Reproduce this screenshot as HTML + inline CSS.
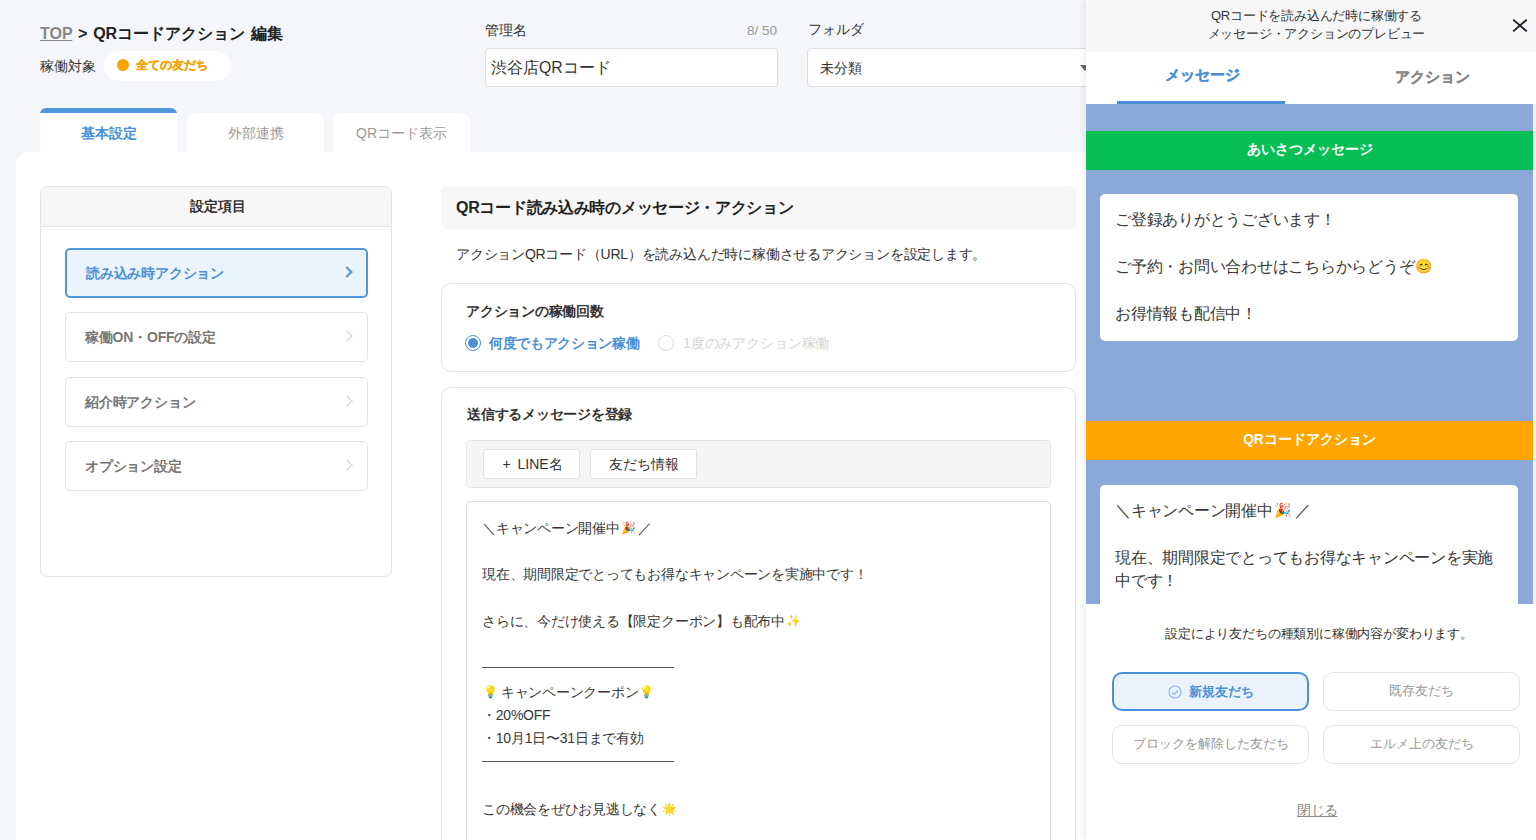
<!DOCTYPE html>
<html lang="ja"><head><meta charset="utf-8">
<style>
*{box-sizing:border-box;margin:0;padding:0}
html,body{width:1536px;height:840px;overflow:hidden}
body{font-family:"Liberation Sans",sans-serif;background:#f4f6fa;color:#333;position:relative}
.a{position:absolute;white-space:nowrap}
.t{line-height:1}
/* top */
.crumb{left:40px;top:25.5px;font-size:16px;font-weight:bold;color:#222;word-spacing:1.3px}
.crumb u{color:#888;text-decoration:underline}
.lbl{font-size:14px;color:#333}
.pill{left:104px;top:51px;width:127px;height:30px;border-radius:15px;background:#fff}
.dot{left:117px;top:59px;width:12px;height:12px;border-radius:50%;background:#f5a400}
.pilltxt{left:136px;top:59px;font-size:12px;font-weight:bold;color:#f5a400;-webkit-text-stroke:0.25px currentColor}
.inp{background:#fff;border:1px solid #dcdcdc;border-radius:4px}
.tab{top:113px;height:39px;width:137px;background:#fff;border-radius:8px 8px 0 0;font-size:14px;color:#999;text-align:center;line-height:40px}
.tab.on{top:108px;height:44px;background:linear-gradient(#5096dc 0 5px,#fff 5px);border-radius:6px 6px 0 0;color:#4a90d9;font-weight:bold;line-height:51px}
.main{left:16px;top:152px;width:1600px;height:800px;background:#fff;border-radius:12px 0 0 0}
/* sidebar */
.side{left:40px;top:186px;width:352px;height:391px;border:1px solid #e3e3e3;border-radius:8px;overflow:hidden;background:#fff}
.sidehd{left:0;top:0;width:100%;height:40px;background:#f7f7f7;border-bottom:1px solid #e3e3e3;text-align:center;font-size:14px;font-weight:bold;line-height:39px;color:#333;padding-left:3px}
.item{left:65px;width:303px;height:50px;border:1.5px solid #e3e3e3;border-radius:5px;background:#fff;font-size:14px;letter-spacing:-0.2px;font-weight:bold;color:#777;padding-left:19px;line-height:48px}
.item.on{line-height:46px;border:2px solid #5096dc;background:#ebf3fc;color:#4a90d9}
.chev{position:absolute;right:16px;top:19px;width:8px;height:8px;border-right:1.5px solid #ccc;border-top:1.5px solid #ccc;transform:rotate(45deg)}
.item.on .chev{border-color:#5096dc;border-width:2px;top:17.5px;right:15.5px}
/* middle */
.hbar{left:441px;top:186px;width:635px;height:43px;background:#f7f7f7;border-radius:6px;font-size:16px;letter-spacing:-0.29px;font-weight:bold;color:#222;padding-left:15px;line-height:43.5px}
.card{left:441px;width:635px;border:1px solid #e3e3e3;border-radius:10px;background:#fff}
.bold14{font-size:14px;font-weight:bold;color:#333;letter-spacing:-0.25px}
.tool{left:466px;top:440px;width:585px;height:48px;background:#f5f5f5;border:1px solid #e6e6e6;border-radius:4px}
.btn{top:449px;height:30px;background:#fff;border:1px solid #e3e3e3;border-radius:3px;font-size:14px;color:#333;text-align:center;line-height:28px}
.ta{left:466px;top:501px;width:585px;height:400px;border:1px solid #dcdcdc;border-radius:4px;background:#fff}
.msg{left:482px;top:516.5px;font-size:14px;letter-spacing:-0.23px;line-height:23.43px;color:#383838;white-space:pre}
.em{font-size:12px;margin:0 3px 0 1px;vertical-align:1px}
.bem{font-size:14px;margin:0 1px;vertical-align:1px}
.hr{display:inline-block;width:192px;border-bottom:1px solid #555;vertical-align:middle;position:relative;top:-1.5px}
/* preview */
.pv{left:1086px;top:0;width:450px;height:840px;background:#fff;box-shadow:-3px 0 6px rgba(0,0,0,.06)}
.pvhd{left:0;top:0;width:450px;height:52px;background:#f7f7f7}
.pvtitle{left:5.5px;top:6.6px;width:450px;text-align:center;font-size:13px;letter-spacing:-0.2px;line-height:18.6px;color:#333;white-space:normal}
.pvx{left:426px;top:18px;width:16px;height:15px}
.pvtab{top:64px;font-size:15px;font-weight:bold;line-height:22px;-webkit-text-stroke:0.3px currentColor}
.uline{left:31px;top:101px;width:168px;height:3px;background:#4a90d9}
.chat{left:0;top:104px;width:447px;height:500px;background:#8ba9d8;overflow:hidden}
.sbar{left:447px;top:104px;width:3px;height:500px;background:#f1f1f1}
.bar{left:0;width:447px;height:39px;font-size:13.8px;font-weight:bold;color:#fff;text-align:center;line-height:37px}
.bub{left:14px;width:418px;background:#fff;border-radius:5px;padding:13px 15px;font-size:16px;line-height:23.43px;color:#383838;white-space:normal;padding-top:14px;letter-spacing:-0.25px}
.note{left:8px;top:627px;width:450px;text-align:center;font-size:13px;letter-spacing:-0.17px;color:#333}
.fb{width:197px;height:39px;border:1.5px solid #e3e3e3;border-radius:10px;font-size:13px;color:#999;text-align:center;line-height:36px;background:#fff}
.fb.on{border:2px solid #4a90d9;background:#eaf3fc;color:#4a90d9;font-weight:bold;line-height:35px}
.close{left:6.3px;top:803px;width:450px;text-align:center;font-size:14px;letter-spacing:-0.5px;color:#888}
.close span{text-decoration:underline}
</style></head>
<body>
<!-- header -->
<div class="a t crumb"><u>TOP</u> &gt; QRコードアクション 編集</div>
<div class="a t lbl" style="left:40px;top:58.5px">稼働対象</div>
<div class="a pill"></div>
<div class="a dot"></div>
<div class="a t pilltxt">全ての友だち</div>

<div class="a t lbl" style="left:485px;top:23px">管理名</div>
<div class="a t" style="left:747px;top:24px;font-size:13.5px;color:#999">8/ 50</div>
<div class="a inp" style="left:485px;top:48px;width:293px;height:39px"></div>
<div class="a t" style="left:491px;top:59.7px;font-size:15.8px;color:#333">渋谷店QRコード</div>

<div class="a t lbl" style="left:808px;top:21.6px">フォルダ</div>
<div class="a inp" style="left:807px;top:48px;width:300px;height:39px"></div>
<div class="a t" style="left:820px;top:61px;font-size:14px;color:#333">未分類</div>
<div class="a" style="left:1080px;top:65px;width:0;height:0;border-left:5px solid transparent;border-right:5px solid transparent;border-top:6px solid #666"></div>

<div class="a tab on" style="left:40px">基本設定</div>
<div class="a tab" style="left:187px">外部連携</div>
<div class="a tab" style="left:333px">QRコード表示</div>

<div class="a main"></div>

<!-- sidebar -->
<div class="a side"><div class="a sidehd">設定項目</div></div>
<div class="a item on" style="top:248px">読み込み時アクション<i class="chev"></i></div>
<div class="a item" style="top:312px">稼働ON・OFFの設定<i class="chev"></i></div>
<div class="a item" style="top:377px">紹介時アクション<i class="chev"></i></div>
<div class="a item" style="top:441px">オプション設定<i class="chev"></i></div>

<!-- middle -->
<div class="a hbar">QRコード読み込み時のメッセージ・アクション</div>
<div class="a t" style="left:456px;top:247px;font-size:14px;letter-spacing:-0.22px;color:#333">アクションQRコード（URL）を読み込んだ時に稼働させるアクションを設定します。</div>

<div class="a card" style="top:283px;height:89px"></div>
<div class="a t bold14" style="left:466px;top:304px">アクションの稼働回数</div>
<div class="a" style="left:465px;top:335px;width:16px;height:16px;border-radius:50%;border:1.5px solid #4a90d9;background:#fff"></div>
<div class="a" style="left:468px;top:338px;width:10px;height:10px;border-radius:50%;background:#4a90d9"></div>
<div class="a t" style="left:489px;top:335.5px;font-size:14px;letter-spacing:-0.34px;font-weight:bold;color:#4a90d9">何度でもアクション稼働</div>
<div class="a" style="left:658px;top:335px;width:16px;height:16px;border-radius:50%;border:1.5px solid #ddd;background:#fff"></div>
<div class="a t" style="left:683px;top:335.5px;font-size:14px;letter-spacing:-0.14px;color:#d4d4d4">1度のみアクション稼働</div>

<div class="a card" style="top:387px;height:500px"></div>
<div class="a t bold14" style="left:467px;top:407px">送信するメッセージを登録</div>
<div class="a tool"></div>
<div class="a btn" style="left:483px;width:97px;text-align:left;padding-left:18.5px;word-spacing:3px">+ LINE名</div>
<div class="a btn" style="left:590px;width:107px">友だち情報</div>
<div class="a ta"></div>
<div class="a msg">＼キャンペーン開催中<span class="em">🎉</span>／

現在、期間限定でとってもお得なキャンペーンを実施中です！

さらに、今だけ使える【限定クーポン】も配布中<span class="em">✨</span>

<span class="hr"></span>
<span class="em">💡</span>キャンペーンクーポン<span class="em">💡</span>
・20%OFF
・10月1日〜31日まで有効
<span class="hr"></span>

この機会をぜひお見逃しなく<span class="em">🌟</span></div>

<!-- preview -->
<div class="a pv">
  <div class="a pvhd"></div>
  <div class="a pvtitle">QRコードを読み込んだ時に稼働する<br>メッセージ・アクションのプレビュー</div>
  <svg class="a pvx" viewBox="0 0 16 15"><path d="M1.2 1.6L14.8 13.4M14.8 1.6L1.2 13.4" stroke="#1c1c28" stroke-width="1.9"/></svg>
  <div class="a t pvtab" style="left:79px;color:#4a90d9">メッセージ</div>
  <div class="a t pvtab" style="left:309px;top:65.5px;color:#888">アクション</div>
  <div class="a uline"></div>
  <div class="a chat">
    <div class="a bar" style="top:27px;background:#08bf55">あいさつメッセージ</div>
    <div class="a bub" style="top:90px;height:147px">ご登録ありがとうございます！<br><br>ご予約・お問い合わせはこちらからどうぞ<span class="bem">😊</span><br><br>お得情報も配信中！</div>
    <div class="a bar" style="top:317px;background:#ffa500">QRコードアクション</div>
    <div class="a bub" style="top:381px;height:300px">＼キャンペーン開催中<span class="bem">🎉</span> ／<br><br>現在、期間限定でとってもお得なキャンペーンを実施中です！</div>
  </div>
  <div class="a sbar"></div>
  <div class="a t note">設定により友だちの種類別に稼働内容が変わります。</div>
  <div class="a fb on" style="left:26px;top:672px"><svg width="14" height="14" viewBox="0 0 14 14" style="vertical-align:-2.5px;margin-right:7px;margin-left:1px"><circle cx="7" cy="7" r="6" fill="none" stroke="#8db8e8" stroke-width="1.2"/><path d="M4 7.4l2.2 2 3.8-3.9" fill="none" stroke="#8db8e8" stroke-width="1.4"/></svg>新規友だち</div>
  <div class="a fb" style="left:237px;top:672px">既存友だち</div>
  <div class="a fb" style="left:26px;top:725px">ブロックを解除した友だち</div>
  <div class="a fb" style="left:237px;top:725px">エルメ上の友だち</div>
  <div class="a t close"><span>閉じる</span></div>
</div>
</body></html>
